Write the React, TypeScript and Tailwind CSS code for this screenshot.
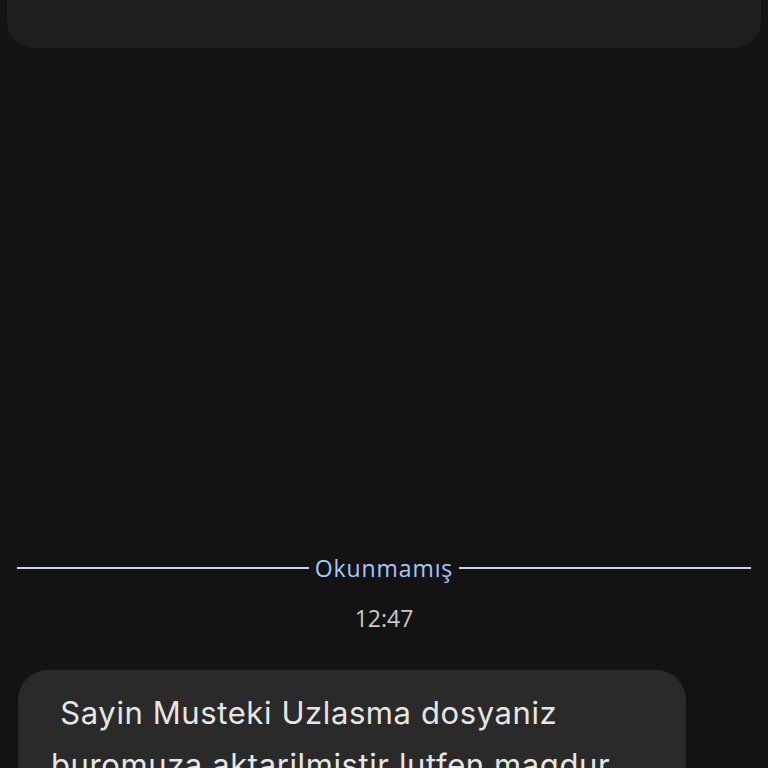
const App: React.FC = () => {
  return (
    <div
      className="h-[768px] w-full overflow-hidden bg-[#131314] flex flex-col"
      style={{ fontFamily: '"Open Sans", Roboto, Arial, sans-serif' }}
    >
      {/* Previous message card (scrolled out of view) */}
      <div className="mx-[7px] h-[48px] shrink-0 rounded-b-[26px] bg-[#1e1e1f]"></div>

      {/* Unread divider */}
      <div className="mt-[505px] flex items-center px-[17px] h-[30px]">
        <div className="flex-1 h-[2px] bg-[#c2d5f5]"></div>
        <span className="px-[6px] text-[23px] leading-[30px] tracking-[0.9px] text-[#a8c7fa]">Okunmamış</span>
        <div className="flex-1 h-[2px] bg-[#c2d5f5]"></div>
      </div>

      {/* Timestamp */}
      <div className="mt-[20px] text-center text-[23px] leading-[30px] text-[#c9c9c9]">12:47</div>

      {/* Incoming message bubble */}
      <div className="mt-[37px] ml-[18px] w-[668px] shrink-0 rounded-[30px] bg-[#2a2a2a] pl-[33px] pr-[36px] pt-[17px] pb-[20px]">
        <p
          className="text-[31px] leading-[52px] tracking-[0.6px] text-[#e6e6e6] whitespace-pre-wrap"
          style={{ fontFamily: 'Inter, "Open Sans", Arial, sans-serif' }}
        >
          {' Sayin Musteki Uzlasma dosyaniz buromuza aktarilmistir lutfen magdur ile gorusmek icin iletisime geciniz'}
        </p>
      </div>
    </div>
  );
};

export default App;
